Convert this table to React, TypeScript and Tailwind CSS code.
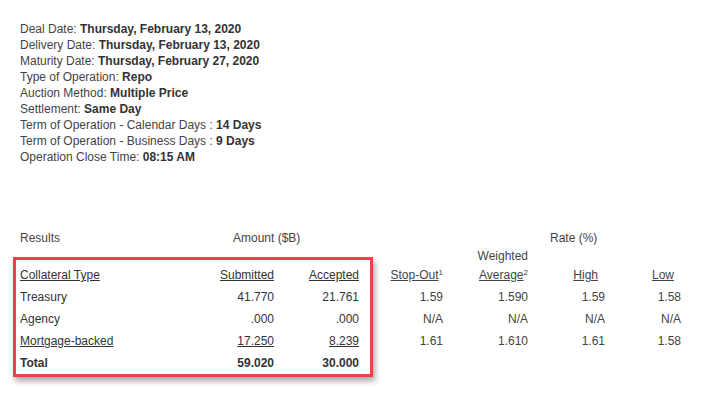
const info: [string, string][] = [
  ["Deal Date: ", "Thursday, February 13, 2020"],
  ["Delivery Date: ", "Thursday, February 13, 2020"],
  ["Maturity Date: ", "Thursday, February 27, 2020"],
  ["Type of Operation: ", "Repo"],
  ["Auction Method: ", "Multiple Price"],
  ["Settlement: ", "Same Day"],
  ["Term of Operation - Calendar Days : ", "14 Days"],
  ["Term of Operation - Business Days : ", "9 Days"],
  ["Operation Close Time: ", "08:15 AM"],
];

type Row = { type: string; sub: string; acc: string; link?: boolean; total?: boolean };

const rows: Row[] = [
  { type: "Treasury", sub: "41.770", acc: "21.761" },
  { type: "Agency", sub: ".000", acc: ".000" },
  { type: "Mortgage-backed", sub: "17.250", acc: "8.239", link: true },
  { type: "Total", sub: "59.020", acc: "30.000", total: true },
];

const rates = [
  ["1.59", "1.590", "1.59", "1.58"],
  ["N/A", "N/A", "N/A", "N/A"],
  ["1.61", "1.610", "1.61", "1.58"],
  ["", "", "", ""],
];

export default function App() {
  return (
    <div className="w-[706px] h-[399px] bg-white text-[12px] text-[#333] font-['Liberation_Sans',Arial,sans-serif]">
      <div className="pl-5 pt-[21px] leading-4">
        {info.map(([label, value]) => (
          <div key={label}>
            <span className="text-[#444]">{label}</span>
            <span className="font-bold">{value}</span>
          </div>
        ))}
      </div>

      <div className="mt-[65px] pl-5 grid grid-cols-[213px_317px_auto] leading-4 text-[#444]">
        <div>Results</div>
        <div>Amount ($B)</div>
        <div>Rate (%)</div>
      </div>

      <div className="mt-[3px] flex items-start">
        <div className="mt-[8px] ml-[13px] w-[360px] border-[3px] border-[#e8424a] pl-1 pr-[11px] pt-[4px] shadow-[2px_4px_6px_rgba(0,0,0,0.35)]">
          <div className="grid grid-cols-[150px_104px_85px] leading-[22px]">
            <div className="underline">Collateral Type</div>
            <div className="text-right underline">Submitted</div>
            <div className="text-right underline">Accepted</div>
            {rows.map((r) => (
              <div key={r.type} className={`contents ${r.total ? "font-bold" : ""}`}>
                <div className={r.link ? "underline" : ""}>{r.type}</div>
                <div className={`text-right ${r.link ? "underline" : ""}`}>{r.sub}</div>
                <div className={`text-right ${r.link ? "underline" : ""}`}>{r.acc}</div>
              </div>
            ))}
          </div>
        </div>

        <div className="grid grid-cols-[70px_85px_77px_76px] text-[#444]">
          <div className="h-[37px] flex flex-col justify-end text-right">
            <div className="leading-[22px]">
              <span className="underline">Stop-Out</span>
              <sup className="text-[8px]">1</sup>
            </div>
          </div>
          <div className="h-[37px] flex flex-col justify-end text-right">
            <div className="leading-[15px]">Weighted</div>
            <div className="leading-[22px]">
              <span className="underline">Average</span>
              <sup className="text-[8px]">2</sup>
            </div>
          </div>
          <div className="h-[37px] flex flex-col justify-end text-right pr-[7px]">
            <div className="leading-[22px] underline">High</div>
          </div>
          <div className="h-[37px] flex flex-col justify-end text-right pr-[7px]">
            <div className="leading-[22px] underline">Low</div>
          </div>
          {rates.map((r, i) =>
            r.map((v, j) => (
              <div key={`${i}-${j}`} className="h-[22px] leading-[22px] text-right">
                {v}
              </div>
            ))
          )}
        </div>
      </div>
    </div>
  );
}
